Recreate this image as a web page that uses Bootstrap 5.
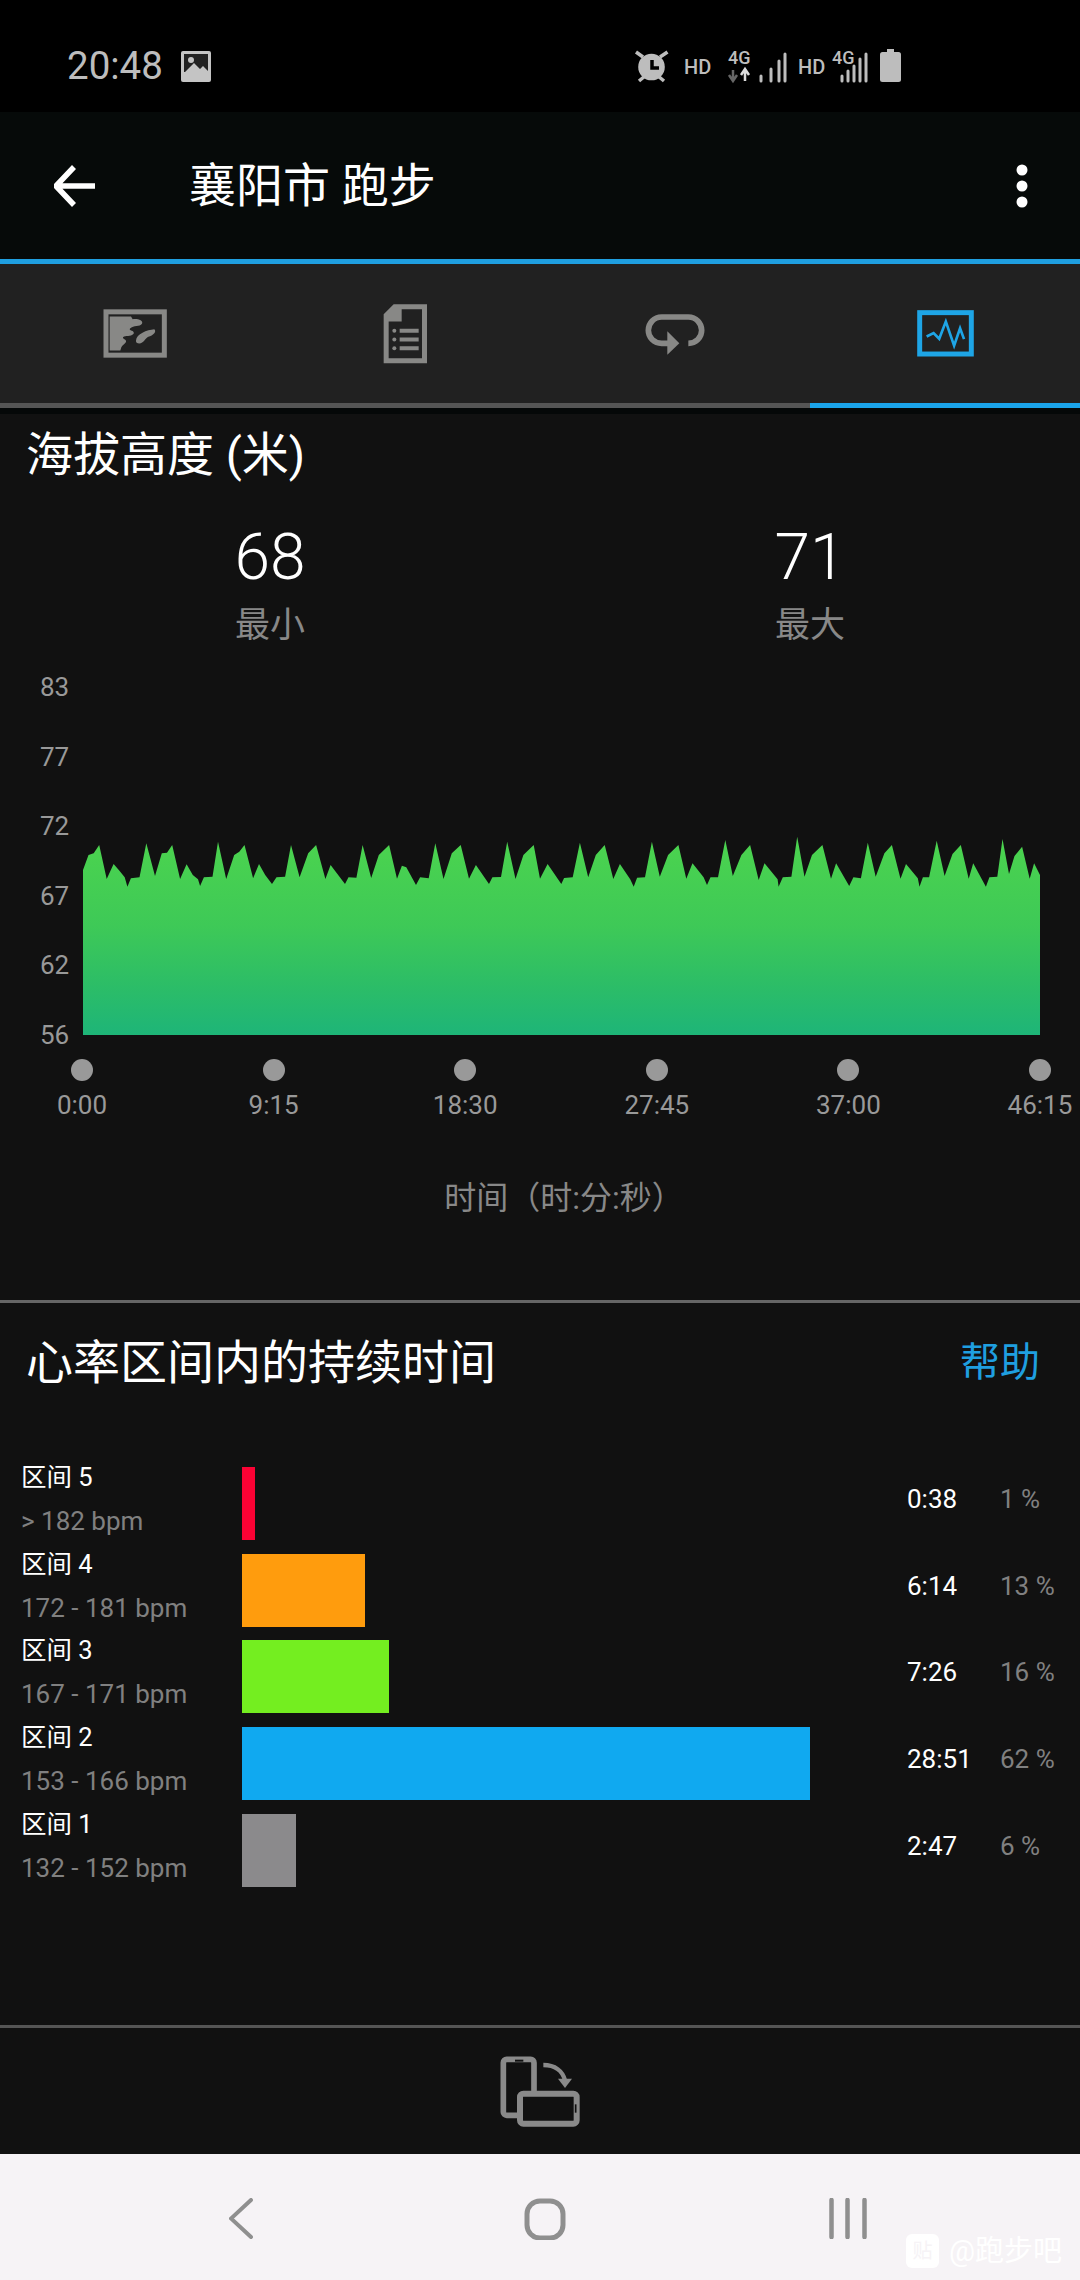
<!DOCTYPE html>
<html lang="zh-CN">
<head>
    <meta charset="UTF-8">
    <meta name="viewport" content="width=device-width, initial-scale=1.0">
    <title>襄阳市 跑步</title>
    <link href="https://cdn.jsdelivr.net/npm/bootstrap@5.3.0/dist/css/bootstrap.min.css" rel="stylesheet">
    <style>
        body {
            width: 1080px;
            height: 2280px;
            overflow: hidden;
            background-color: #111111;
            color: #fff;
            font-family: Roboto, "Noto Sans CJK SC", sans-serif;
        }
        svg { display: block; flex: none; }

        /* top bars */
        .status-strip { height: 112px; background: #000; padding: 20px 177px 0 67px; }
        .clock { font-size: 38.5px; color: #bdbdbd; line-height: 1; margin-right: 18px; }
        .app-bar { height: 147px; background: #060a09; padding: 0 52px 0 54px; }
        .app-title { font-size: 47px; line-height: 60px; margin-left: 93px; }
        .accent-line { height: 5px; background: #1f9fe0; }
        .tab-strip { height: 139px; background: #212121; }
        .tab-rail { height: 5px; background: #555; }
        .tab-rail-on { width: 270px; background: #1ba4ea; }
        .tab-shade { height: 6px; background: #050808; }

        /* altitude */
        .block-title { font-size: 47px; line-height: 60px; padding-left: 26px; }
        .alt-title { margin-top: 11px; }
        .stat-value { font-size: 64px; font-weight: 300; line-height: 60px; margin-top: 43px; }
        .stat-label { font-size: 35px; line-height: 40px; margin-top: 18px; color: #888; }
        .alt-chart { display: grid; grid-template-columns: 83px 957px; margin-top: 26px; }
        .y-labels { height: 378px; padding-left: 40px; font-size: 26px; line-height: 30px; color: #999; }
        .time-axis { padding: 0 1px 0 43px; margin-top: 9px; }
        .time-tick { width: 78px; font-size: 26px; line-height: 30px; color: #999; }
        .time-dot { width: 22px; height: 22px; border-radius: 50%; background: #999; margin-bottom: 9px; }
        .axis-name { font-size: 32px; line-height: 40px; color: #888; margin-top: 58px; padding-left: 48px; }
        .rule { height: 3px; background: #666; }
        .rule-alt { margin-top: 82px; }

        /* heart rate zones */
        .zone-head { margin-top: 30px; padding-right: 40px; }
        .help-link { font-size: 40px; line-height: 60px; color: #1f9fe0; }
        .zone-list { height: 558px; margin-top: 74px; }
        .zone-row { height: 73px; margin-bottom: 13.67px; }
        .zone-names { width: 242px; padding-left: 21px; }
        .zone-name { font-size: 25.5px; line-height: 30px; margin-top: -5px; }
        .zone-range { font-size: 26px; line-height: 30px; margin-top: 14px; color: #808080; white-space: nowrap; }
        .zone-track { width: 665px; }
        .zone-bar { height: 73px; }
        .zone-time { width: 93px; font-size: 26px; padding-bottom: 8px; }
        .zone-share { font-size: 26px; color: #808080; padding-bottom: 8px; }

        /* bottom */
        .rule-low { background: #555; }
        .rotate-bar { height: 126px; }
        .nav-strip { position: relative; height: 126px; background: #f6f3f6; padding-top: 3px; }
        .nav-back { margin-left: 229px; }
        .nav-home { margin: 0 263px 0 271px; }
        .mark-wrap { position: absolute; right: 18px; top: 80px; color: #fff; font-size: 29px; line-height: 34px; }
        .mark-badge { width: 33px; height: 34px; border-radius: 6px; background: #fff; color: #f6f3f6; font-size: 20px; margin-right: 10px; }
    </style>
</head>
<body>

<!-- Status bar -->
<div class="status-strip d-flex align-items-center justify-content-between">
    <div class="d-flex align-items-center">
        <span class="clock">20:48</span>
        <svg width="30" height="31" viewBox="0 0 30 31">
            <rect width="30" height="31" rx="2" fill="#c4c4c4"/>
            <rect x="3" y="3" width="24" height="18" fill="#222"/>
            <circle cx="10" cy="9" r="3" fill="#c4c4c4"/>
            <path d="M3 22 L13 12 L19 18 L22 15 L27 20 V25 H3 Z" fill="#c4c4c4"/>
        </svg>
    </div>
    <svg width="270" height="38" viewBox="633 48 270 38" fill="#bdbdbd" font-family="Roboto, sans-serif">
        <circle cx="651.5" cy="68" r="13.3"/>
        <path d="M636 53 L643 58 M667.5 53 L660 58 M639 82 L645 77 M664 82 L658 77" stroke="#bdbdbd" stroke-width="3.5" fill="none"/>
        <path d="M652 61 V69 H659" stroke="#000" stroke-width="3.5" fill="none"/>
        <text x="684" y="74.5" font-size="20" font-weight="500">HD</text>
        <text x="728" y="65" font-size="18" font-weight="500">4G</text>
        <path d="M733 71 V80 M729 76 L733 82 L737 76" stroke="#666" stroke-width="2.5" fill="none"/>
        <path d="M745 82 V72 M741 76 L745 70 L749 76" stroke="#ddd" stroke-width="2.5" fill="none"/>
        <g stroke="#bdbdbd" stroke-width="3" stroke-linecap="round">
            <path d="M761 82 V77 M771 82 V70 M779 82 V62 M785 82 V55"/>
            <text x="798" y="74.5" font-size="20" font-weight="500" stroke="none">HD</text>
            <text x="832" y="65" font-size="18" font-weight="500" stroke="none">4G</text>
            <path d="M842 82 V77 M848 82 V72 M854 82 V67 M860 82 V60 M866 82 V55"/>
        </g>
        <rect x="880" y="53" width="21" height="30" rx="2.5"/>
        <rect x="887" y="50" width="7" height="4"/>
    </svg>
</div>

<!-- App bar -->
<div class="app-bar d-flex align-items-center">
    <svg width="42" height="42" viewBox="54 165 42 42">
        <path d="M74 167 L56 186 L74 205 M56 186 H95" stroke="#fff" stroke-width="5.5" fill="none"/>
    </svg>
    <div class="app-title">襄阳市 跑步</div>
    <svg class="ms-auto" width="12" height="44" viewBox="0 0 12 44" fill="#fff">
        <circle cx="6" cy="6" r="5.5"/>
        <circle cx="6" cy="22" r="5.5"/>
        <circle cx="6" cy="38" r="5.5"/>
    </svg>
</div>
<div class="accent-line"></div>

<!-- Tabs -->
<div class="tab-strip row g-0 align-items-center text-center">
    <div class="col-3 d-flex justify-content-center">
        <svg width="65" height="51" viewBox="130 85 195 152" fill="#888886">
            <rect x="139" y="96" width="175" height="130" fill="none" stroke="#888886" stroke-width="15"/>
            <path d="M150 110 H214 L219 118 C235 116 252 122 247 132 C240 142 222 136 211 146 C206 154 226 150 222 162 C212 172 198 166 190 172 C188 178 204 178 198 188 C192 196 188 196 185 202 L182 212 H150 Z"/>
            <path d="M229 182 C230 162 262 150 284 148 C292 156 280 166 266 171 C256 176 252 191 239 191 C232 191 228 188 229 182 Z"/>
        </svg>
    </div>
    <div class="col-3 d-flex justify-content-center">
        <svg width="45" height="61" viewBox="968 70 135 182" fill="#888886">
            <path fill-rule="evenodd" d="M1000 73 H1100 V250 H970 V103 Z M1024 88 V125 H985 V235 H1085 V88 Z"/>
            <circle cx="1002" cy="153" r="6"/>
            <circle cx="1002" cy="179" r="6"/>
            <circle cx="1002" cy="205" r="6"/>
            <path d="M1018 147 H1075 V159 H1018 Z M1018 173 H1075 V185 H1018 Z M1018 199 H1075 V211 H1018 Z"/>
        </svg>
    </div>
    <div class="col-3 d-flex justify-content-center">
        <svg width="62" height="44" viewBox="72 110 186 132">
            <path d="M145 204 H125 C102 204 85 187 85 165 C85 143 102 125 125 125 H205 C228 125 245 143 245 165 C245 187 228 204 205 204" fill="none" stroke="#888886" stroke-width="17"/>
            <path d="M142 168 L178 204 L142 238 Z" fill="#888886"/>
        </svg>
    </div>
    <div class="col-3 d-flex justify-content-center">
        <svg width="57" height="47" viewBox="888 90 172 142">
            <rect x="896" y="98" width="156" height="125" fill="none" stroke="#1ea5e6" stroke-width="15"/>
            <polyline points="917,170 938,160 955,177 975,125 1000,198 1018,145 1030,178" fill="none" stroke="#1ea5e6" stroke-width="8"/>
        </svg>
    </div>
</div>
<div class="tab-rail d-flex justify-content-end"><div class="tab-rail-on"></div></div>
<div class="tab-shade"></div>

<!-- Altitude -->
<div class="block-title alt-title">海拔高度 (米)</div>
<div class="row g-0 text-center">
    <div class="col-6">
        <div class="stat-value">68</div>
        <div class="stat-label">最小</div>
    </div>
    <div class="col-6">
        <div class="stat-value">71</div>
        <div class="stat-label">最大</div>
    </div>
</div>

<div class="alt-chart">
    <div class="y-labels d-flex flex-column justify-content-between">
        <span>83</span><span>77</span><span>72</span><span>67</span><span>62</span><span>56</span>
    </div>
    <svg width="957" height="363" viewBox="83 672 957 363">
        <defs>
            <linearGradient id="altFill" x1="0" y1="0" x2="0" y2="1">
                <stop offset="0" stop-color="#4cd44e"/>
                <stop offset="0.45" stop-color="#3ec957"/>
                <stop offset="0.75" stop-color="#2cbd67"/>
                <stop offset="1" stop-color="#1eb578"/>
            </linearGradient>
        </defs>
        <polygon id="altArea" fill="url(#altFill)"/>
    </svg>
</div>

<div class="time-axis d-flex justify-content-between">
    <div class="time-tick d-flex flex-column align-items-center"><div class="time-dot"></div>0:00</div>
    <div class="time-tick d-flex flex-column align-items-center"><div class="time-dot"></div>9:15</div>
    <div class="time-tick d-flex flex-column align-items-center"><div class="time-dot"></div>18:30</div>
    <div class="time-tick d-flex flex-column align-items-center"><div class="time-dot"></div>27:45</div>
    <div class="time-tick d-flex flex-column align-items-center"><div class="time-dot"></div>37:00</div>
    <div class="time-tick d-flex flex-column align-items-center"><div class="time-dot"></div>46:15</div>
</div>
<div class="axis-name text-center">时间（时:分:秒）</div>
<div class="rule rule-alt"></div>

<!-- Heart rate zones -->
<div class="zone-head d-flex justify-content-between">
    <div class="block-title">心率区间内的持续时间</div>
    <div class="help-link">帮助</div>
</div>
<div class="zone-list" id="zoneList"></div>
<div class="rule rule-low"></div>

<div class="rotate-bar d-flex align-items-center justify-content-center">
    <svg width="120" height="100" viewBox="0 0 360 300">
        <rect x="70" y="55" width="92" height="168" rx="10" fill="none" stroke="#8a8a8a" stroke-width="17"/>
        <path d="M105 59 H130" stroke="#111" stroke-width="6"/>
        <rect x="120" y="158" width="170" height="90" rx="10" fill="#111" stroke="#8a8a8a" stroke-width="18"/>
        <path d="M287 190 V215" stroke="#111" stroke-width="5"/>
        <path d="M190 72 C225 72 248 90 255 118" fill="none" stroke="#8a8a8a" stroke-width="13"/>
        <path d="M234 113 H276 L255 141 Z" fill="#8a8a8a"/>
    </svg>
</div>

<!-- Android nav -->
<div class="nav-strip d-flex align-items-center">
    <svg class="nav-back" width="24" height="41" viewBox="229 2198 24 41">
        <path d="M251 2200 L231 2218.5 L251 2237" fill="none" stroke="#8f8f8f" stroke-width="4" stroke-linecap="round"/>
    </svg>
    <svg class="nav-home" width="42" height="42" viewBox="0 0 42 42">
        <rect x="3" y="3" width="36" height="37" rx="13" fill="none" stroke="#8f8f8f" stroke-width="5"/>
    </svg>
    <svg width="38" height="41" viewBox="0 0 38 41">
        <path d="M2.5 2 V39 M18.5 2 V39 M35.5 2 V39" stroke="#8f8f8f" stroke-width="4.5" stroke-linecap="round"/>
    </svg>
    <div class="mark-wrap d-flex align-items-center">
        <span class="mark-badge d-flex align-items-center justify-content-center">贴</span>
        <span>@跑步吧</span>
    </div>
</div>

<script src="https://cdn.jsdelivr.net/npm/bootstrap@5.3.0/dist/js/bootstrap.bundle.min.js"></script>
<script>
    // Altitude outline, read off the chart: [x, y] pairs for the left and right half
    const leftHalf = [241,690,257,645,272,640,288,615,310,717,330,672,345,690,362,712,370,740,380,715,405,712,425,610,450,708,470,640,485,638,500,615,523,717,542,673,560,705,575,718,581,738,592,712,617,710,633,605,657,717,680,645,695,635,710,615,735,715,752,672,770,705,790,732,803,712,828,710,845,615,870,712,895,640,918,615,945,717,960,675,975,695,1002,732,1012,712,1035,713,1053,615,1078,714,1100,645,1130,615,1153,716,1167,677,1180,682,1208,735,1220,712,1245,715,1264,610,1288,717,1312,640,1338,615,1362,716,1382,675,1420,732,1430,712,1455,711,1473,605,1497,717,1520,645,1550,615];
    const rightHalf = [0,716,22,672,62,732,70,714,95,712,116,608,140,712,162,645,188,615,213,717,232,672,262,718,272,740,282,713,305,712,325,605,348,710,372,645,402,615,425,716,443,670,475,712,485,735,495,712,517,712,538,600,560,708,585,645,610,615,635,720,652,670,690,718,693,740,705,712,730,710,747,590,768,710,790,645,820,615,845,716,860,670,898,738,910,712,932,715,952,608,975,710,1000,640,1022,615,1047,716,1063,672,1097,715,1102,740,1112,712,1130,712,1152,602,1175,708,1198,642,1222,615,1245,716,1258,670,1295,740,1305,712,1328,710,1343,597,1362,702,1378,648,1400,620,1422,716,1435,670,1452,705];

    let pts = ["83,1035"];
    const addPoints = (list, offset) => {
        for (let i = 0; i < list.length; i += 2) {
            pts.push((offset + list[i] / 2.904).toFixed(1) + "," + (640 + list[i + 1] / 3).toFixed(1));
        }
    };
    addPoints(leftHalf, 0);
    addPoints(rightHalf, 540);
    pts.push("1040,1035");
    document.getElementById("altArea").setAttribute("points", pts.join(" "));

    // Zones
    const zones = [
        { name: "区间 5", range: "> 182 bpm", w: 12.5, color: "#fb0234", time: "0:38", share: "1 %" },
        { name: "区间 4", range: "172 - 181 bpm", w: 122.6, color: "#ff9c0d", time: "6:14", share: "13 %" },
        { name: "区间 3", range: "167 - 171 bpm", w: 146.7, color: "#74ee20", time: "7:26", share: "16 %" },
        { name: "区间 2", range: "153 - 166 bpm", w: 568, color: "#10a9f0", time: "28:51", share: "62 %" },
        { name: "区间 1", range: "132 - 152 bpm", w: 54.4, color: "#8b8a8c", time: "2:47", share: "6 %" }
    ];
    document.getElementById("zoneList").innerHTML = zones.map(z =>
        `<div class="zone-row d-flex">
            <div class="zone-names">
                <div class="zone-name">${z.name}</div>
                <div class="zone-range">${z.range}</div>
            </div>
            <div class="zone-track"><div class="zone-bar" style="width:${z.w}px;background:${z.color}"></div></div>
            <div class="zone-time d-flex align-items-center">${z.time}</div>
            <div class="zone-share d-flex align-items-center">${z.share}</div>
        </div>`).join("");
</script>
</body>
</html>
